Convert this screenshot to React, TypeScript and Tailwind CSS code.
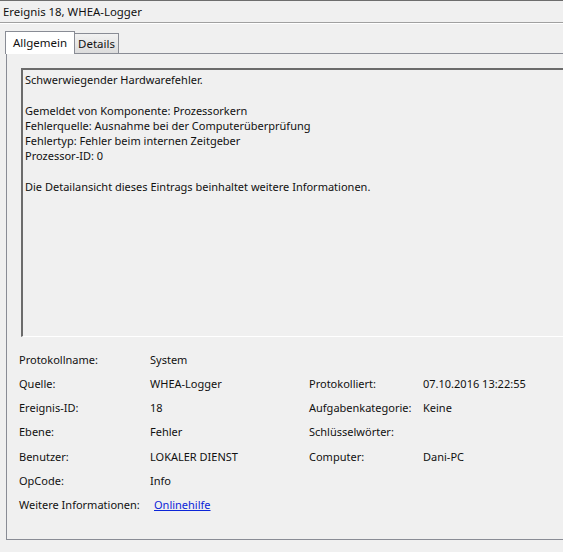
const rows: [string, React.ReactNode, string?, string?][] = [
  ["Protokollname:", "System"],
  ["Quelle:", "WHEA-Logger", "Protokolliert:", "07.10.2016 13:22:55"],
  ["Ereignis-ID:", "18", "Aufgabenkategorie:", "Keine"],
  ["Ebene:", "Fehler", "Schlüsselwörter:", ""],
  ["Benutzer:", "LOKALER DIENST", "Computer:", "Dani-PC"],
  ["OpCode:", "Info"],
  [
    "Weitere Informationen:",
    <a href="#" className="text-[#0b25d8] underline ml-[4px]">
      Onlinehilfe
    </a>,
  ],
];

export default function App() {
  return (
    <div
      className="w-[563px] h-[552px] bg-[#f0f0f0] overflow-hidden text-[11px] text-[#111]"
      style={{ fontFamily: '"Noto Sans", "Open Sans", sans-serif' }}
    >
      <div className="border-t border-[#6d6d6d]" />
      <div className="h-[21px] pl-[3px] flex items-center text-[11.4px]">Ereignis 18, WHEA-Logger</div>
      <div className="border-t border-[#a0a0a0] border-b border-b-white" />

      {/* tabs */}
      <div className="flex items-end pl-[5px] pt-[5px] h-[29px]">
        <div className="w-[70px] h-[23px] bg-white border border-b-0 border-[#898c95] flex items-center justify-center relative top-[1px] z-10 text-[11.5px]">
          Allgemein
        </div>
        <div className="w-[44px] h-[20px] bg-gradient-to-b from-[#f2f2f2] to-[#dcdcdc] border border-l-0 border-b-0 border-[#898c95] flex items-center justify-center text-[11.5px]">
          Details
        </div>
      </div>

      {/* panel */}
      <div className="ml-[6px] w-[600px] h-[487px] border border-[#898c95] bg-[#f0f0f0]">
        <div className="ml-[14px] mt-[14px] w-[600px] h-[269px] border-l-2 border-t-2 border-[#6b6b6b] border-b border-b-white pl-[2px] pt-[2px] leading-[15.3px]">
          <div>Schwerwiegender Hardwarefehler.</div>
          <div className="h-[15.3px]" />
          <div>Gemeldet von Komponente: Prozessorkern</div>
          <div>Fehlerquelle: Ausnahme bei der Computerüberprüfung</div>
          <div>Fehlertyp: Fehler beim internen Zeitgeber</div>
          <div>Prozessor-ID: 0</div>
          <div className="h-[15.3px]" />
          <div>Die Detailansicht dieses Eintrags beinhaltet weitere Informationen.</div>
        </div>

        <div className="mt-[11px] ml-[12px] grid grid-cols-[131px_159px_114px_1fr] whitespace-nowrap">
          {rows.map(([l, v, l2, v2], i) => (
            <div key={i} className="contents">
              <div className="h-[24.2px] flex items-center">{l}</div>
              <div className="h-[24.2px] flex items-center">{v}</div>
              <div className="h-[24.2px] flex items-center">{l2 ?? ""}</div>
              <div className="h-[24.2px] flex items-center">{v2 ?? ""}</div>
            </div>
          ))}
        </div>
      </div>
    </div>
  );
}
